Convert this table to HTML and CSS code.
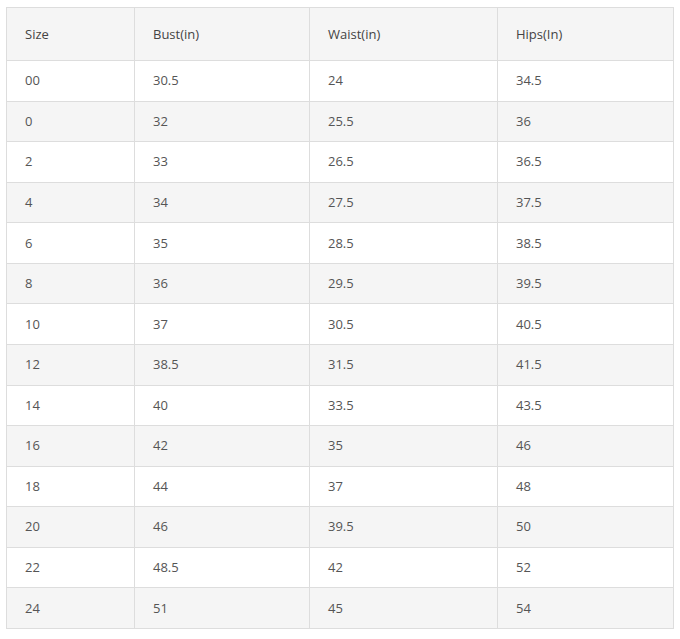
FILE: index.html
```html
<!DOCTYPE html>
<html>
<head>
<meta charset="utf-8">
<link rel="stylesheet" href="styles.css">
</head>
<body>
<div class="wrap">
<table class="size-table">
<colgroup><col class="c1"><col class="c2"><col class="c3"><col class="c4"></colgroup>
<thead>
<tr><th>Size</th><th>Bust(in)</th><th>Waist(in)</th><th>Hips(In)</th></tr>
</thead>
<tbody>
<tr><td>00</td><td>30.5</td><td>24</td><td>34.5</td></tr>
<tr><td>0</td><td>32</td><td>25.5</td><td>36</td></tr>
<tr><td>2</td><td>33</td><td>26.5</td><td>36.5</td></tr>
<tr><td>4</td><td>34</td><td>27.5</td><td>37.5</td></tr>
<tr><td>6</td><td>35</td><td>28.5</td><td>38.5</td></tr>
<tr><td>8</td><td>36</td><td>29.5</td><td>39.5</td></tr>
<tr><td>10</td><td>37</td><td>30.5</td><td>40.5</td></tr>
<tr><td>12</td><td>38.5</td><td>31.5</td><td>41.5</td></tr>
<tr><td>14</td><td>40</td><td>33.5</td><td>43.5</td></tr>
<tr><td>16</td><td>42</td><td>35</td><td>46</td></tr>
<tr><td>18</td><td>44</td><td>37</td><td>48</td></tr>
<tr><td>20</td><td>46</td><td>39.5</td><td>50</td></tr>
<tr><td>22</td><td>48.5</td><td>42</td><td>52</td></tr>
<tr><td>24</td><td>51</td><td>45</td><td>54</td></tr>
</tbody>
</table>
</div>
</body>
</html>
```
FILE: styles.css
```css
html, body {
  margin: 0;
  padding: 0;
  background: #fff;
}
.wrap {
  padding: 7px 0 0 6px;
}
.size-table {
  border-collapse: collapse;
  table-layout: fixed;
  width: 667px;
  font-family: "Open Sans", "Liberation Sans", sans-serif;
  font-size: 13px;
  color: #555;
}
.c1 { width: 128px; }
.c2 { width: 175px; }
.c3 { width: 188px; }
.c4 { width: 176px; }
.size-table th,
.size-table td {
  border: 1px solid #ddd;
  text-align: left;
  padding: 0 0 1px 18px;
  font-weight: normal;
  vertical-align: middle;
}
.size-table thead tr {
  height: 53px;
  background: #f5f5f5;
}
.size-table th {
  color: #444;
}
.size-table tbody tr {
  height: 40.57px;
}
.size-table tbody tr:nth-child(even) {
  background: #f5f5f5;
}
```
